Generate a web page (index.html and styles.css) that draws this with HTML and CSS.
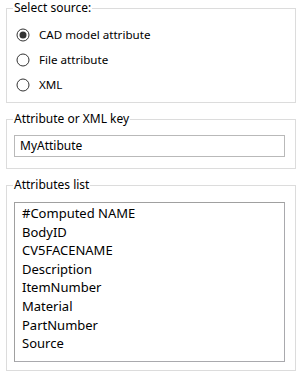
FILE: index.html
```html
<!DOCTYPE html>
<html>
<head>
<meta name="viewport" content="width=device-width, initial-scale=1">
<link rel="stylesheet" href="styles.css">
</head>
<body>

<fieldset class="group group-source">
  <legend>Select source:</legend>
  <label class="radio">
    <svg width="14" height="14" viewBox="0 0 14 14"><circle cx="7" cy="7" r="6" fill="#fff" stroke="#333" stroke-width="1"/><circle cx="7" cy="7" r="3.5" fill="#333"/></svg>
    <span>CAD model attribute</span>
  </label>
  <label class="radio">
    <svg width="14" height="14" viewBox="0 0 14 14"><circle cx="7" cy="7" r="6" fill="#fff" stroke="#333" stroke-width="1"/></svg>
    <span>File attribute</span>
  </label>
  <label class="radio">
    <svg width="14" height="14" viewBox="0 0 14 14"><circle cx="7" cy="7" r="6" fill="#fff" stroke="#333" stroke-width="1"/></svg>
    <span>XML</span>
  </label>
</fieldset>

<fieldset class="group group-key">
  <legend>Attribute or XML key</legend>
  <div class="textbox">MyAttibute</div>
</fieldset>

<fieldset class="group group-list">
  <legend>Attributes list</legend>
  <ul class="listbox">
    <li>#Computed NAME</li>
    <li>BodyID</li>
    <li>CV5FACENAME</li>
    <li>Description</li>
    <li>ItemNumber</li>
    <li>Material</li>
    <li>PartNumber</li>
    <li>Source</li>
  </ul>
</fieldset>

</body>
</html>
```

FILE: styles.css
```css
* {
  box-sizing: border-box;
}

body {
  margin: 0;
  padding: 0 5px 0 6px;
  background: #fff;
  color: #000;
  font-family: "Noto Sans", "DejaVu Sans", sans-serif;
  font-size: 12px;
}

.group {
  margin: 0 0 8px 0;
  padding: 0 10px 0 7px;
  border: 1px solid #dcdcdc;
  min-width: 0;
}

.group legend {
  padding: 0 1px;
  margin-left: -1px;
  font-size: 12px;
  line-height: 16px;
}

.group-source {
  height: 103px;
  padding-top: 6px;
}

.radio {
  display: flex;
  align-items: center;
  height: 25px;
  padding-left: 2px;
  font-size: 11.6px;
}

.radio svg {
  display: block;
  margin-right: 9px;
}

.group-key {
  height: 58px;
  padding-top: 8px;
}

.textbox {
  height: 22px;
  border: 1px solid #b9b9b9;
  padding: 0 5px;
  line-height: 20px;
}

.group-list {
  height: 194px;
  padding-top: 9px;
}

.listbox {
  list-style: none;
  margin: 0;
  padding: 1px 7px;
  height: 160px;
  border: 1px solid #a0a0a0;
  border-right-color: #a9a9ad;
  border-bottom-color: #a9a9ad;
  font-size: 13px;
  line-height: 18.6px;
}
```
